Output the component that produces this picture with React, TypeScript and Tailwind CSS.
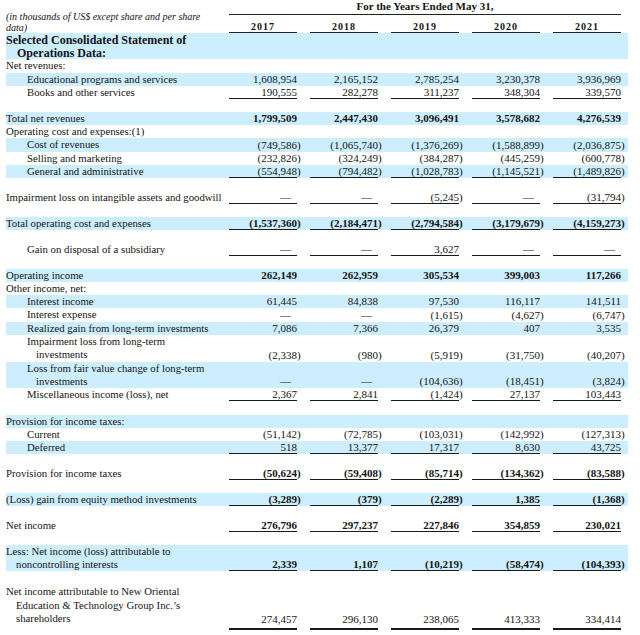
import React from "react";

type Row =
  | { blank: true; tall?: boolean }
  | {
      blank?: false;
      label: React.ReactNode;
      indent?: 0 | 1;
      shaded?: boolean;
      bold?: boolean;
      ul?: boolean;
      ul2?: boolean;
      tall?: boolean;
      values?: string[];
    };

const GRID =
  "grid grid-cols-[223px_68px_13px_68px_13px_68px_13px_68px_13px_68px_7px]";

const NUM = "flex items-end justify-end whitespace-nowrap";
const NUM_UL =
  "flex items-end justify-end whitespace-nowrap shadow-[inset_0_-1px_0_#1a1a1a]";
const NUM_UL2 =
  "flex items-end justify-end whitespace-nowrap pb-[4px] shadow-[inset_0_-2px_0_#1a1a1a]";

const rows: Row[] = [
  { label: "Net revenues:", tall: true },
  {
    label: "Educational programs and services",
    indent: 1,
    shaded: true,
    values: ["1,608,954", "2,165,152", "2,785,254", "3,230,378", "3,936,969"],
  },
  {
    label: "Books and other services",
    indent: 1,
    ul: true,
    values: ["190,555", "282,278", "311,237", "348,304", "339,570"],
  },
  { blank: true },
  {
    label: "Total net revenues",
    shaded: true,
    bold: true,
    values: ["1,799,509", "2,447,430", "3,096,491", "3,578,682", "4,276,539"],
  },
  { label: "Operating cost and expenses:(1)" },
  {
    label: "Cost of revenues",
    indent: 1,
    shaded: true,
    tall: true,
    values: ["(749,586)", "(1,065,740)", "(1,376,269)", "(1,588,899)", "(2,036,875)"],
  },
  {
    label: "Selling and marketing",
    indent: 1,
    values: ["(232,826)", "(324,249)", "(384,287)", "(445,259)", "(600,778)"],
  },
  {
    label: "General and administrative",
    indent: 1,
    shaded: true,
    ul: true,
    values: ["(554,948)", "(794,482)", "(1,028,783)", "(1,145,521)", "(1,489,826)"],
  },
  { blank: true },
  {
    label: "Impairment loss on intangible assets and goodwill",
    ul: true,
    values: ["—", "—", "(5,245)", "—", "(31,794)"],
  },
  { blank: true },
  {
    label: "Total operating cost and expenses",
    shaded: true,
    bold: true,
    ul: true,
    values: ["(1,537,360)", "(2,184,471)", "(2,794,584)", "(3,179,679)", "(4,159,273)"],
  },
  { blank: true },
  {
    label: "Gain on disposal of a subsidiary",
    indent: 1,
    ul: true,
    values: ["—", "—", "3,627", "—", "—"],
  },
  { blank: true },
  {
    label: "Operating income",
    shaded: true,
    bold: true,
    values: ["262,149", "262,959", "305,534", "399,003", "117,266"],
  },
  { label: "Other income, net:" },
  {
    label: "Interest income",
    indent: 1,
    shaded: true,
    values: ["61,445", "84,838", "97,530", "116,117", "141,511"],
  },
  {
    label: "Interest expense",
    indent: 1,
    tall: true,
    values: ["—", "—", "(1,615)", "(4,627)", "(6,747)"],
  },
  {
    label: "Realized gain from long-term investments",
    indent: 1,
    shaded: true,
    values: ["7,086", "7,366", "26,379", "407", "3,535"],
  },
  {
    label: (
      <>
        Impairment loss from long-term
        <br />
        investments
      </>
    ),
    indent: 1,
    tall: true,
    values: ["(2,338)", "(980)", "(5,919)", "(31,750)", "(40,207)"],
  },
  {
    label: (
      <>
        Loss from fair value change of long-term
        <br />
        investments
      </>
    ),
    indent: 1,
    shaded: true,
    values: ["—", "—", "(104,636)", "(18,451)", "(3,824)"],
  },
  {
    label: "Miscellaneous income (loss), net",
    indent: 1,
    ul: true,
    values: ["2,367", "2,841", "(1,424)", "27,137", "103,443"],
  },
  { blank: true, tall: true },
  { label: "Provision for income taxes:", shaded: true },
  {
    label: "Current",
    indent: 1,
    values: ["(51,142)", "(72,785)", "(103,031)", "(142,992)", "(127,313)"],
  },
  {
    label: "Deferred",
    indent: 1,
    shaded: true,
    ul: true,
    values: ["518", "13,377", "17,317", "8,630", "43,725"],
  },
  { blank: true },
  {
    label: "Provision for income taxes",
    bold: true,
    ul: true,
    values: ["(50,624)", "(59,408)", "(85,714)", "(134,362)", "(83,588)"],
  },
  { blank: true },
  {
    label: "(Loss) gain from equity method investments",
    shaded: true,
    bold: true,
    ul: true,
    values: ["(3,289)", "(379)", "(2,289)", "1,385", "(1,368)"],
  },
  { blank: true },
  {
    label: "Net income",
    bold: true,
    ul: true,
    values: ["276,796", "297,237", "227,846", "354,859", "230,021"],
  },
  { blank: true },
  {
    label: (
      <>
        Less: Net income (loss) attributable to
        <br />
        noncontrolling interests
      </>
    ),
    shaded: true,
    bold: true,
    ul: true,
    values: ["2,339", "1,107", "(10,219)", "(58,474)", "(104,393)"],
  },
  { blank: true, tall: true },
  {
    label: (
      <>
        Net income attributable to New Oriental
        <br />
        Education &amp; Technology Group Inc.’s
        <br />
        shareholders
      </>
    ),
    ul2: true,
    values: ["274,457", "296,130", "238,065", "413,333", "334,414"],
  },
];

function ValueCells({
  values,
  bold,
  ul,
  ul2,
}: {
  values: string[];
  bold?: boolean;
  ul?: boolean;
  ul2?: boolean;
}) {
  return (
    <>
      {values.map((v, i) => {
        const neg = v.startsWith("(");
        const dash = v === "—";
        const text = neg ? v.slice(0, -1) : v;
        return (
          <React.Fragment key={i}>
            <div className={ul2 ? NUM_UL2 : ul ? NUM_UL : NUM}>
              <span
                className={
                  (bold ? "font-bold " : "") + (dash ? "pr-[6px]" : "")
                }
              >
                {text}
              </span>
            </div>
            <div
              className={
                ul2
                  ? "flex items-end whitespace-nowrap pb-[4px]"
                  : "flex items-end whitespace-nowrap"
              }
            >
              <span className={bold ? "font-bold" : ""}>{neg ? ")" : ""}</span>
            </div>
          </React.Fragment>
        );
      })}
      <div />
    </>
  );
}

export default function App() {
  return (
    <div
      className="w-[640px] h-[635px] overflow-hidden bg-white text-[#141414] pl-[6px]"
      style={{ fontFamily: '"Liberation Serif", "Times New Roman", serif' }}
    >
      {/* Header */}
      <div className={`${GRID} leading-[13px]`}>
        <div className="row-span-2 h-[33px] pt-[12px]">
          <div className="italic text-[10px] leading-[10.5px] w-[205px]">
            (in thousands of US$ except share and per share data)
          </div>
        </div>
        <div className="col-span-9 h-[15px] border-b border-[#222] text-center font-bold text-[11px] leading-[13px]">
          For the Years Ended May 31,
        </div>
        <div className="col-span-1" />
        {["2017", "2018", "2019", "2020", "2021"].map((y) => (
          <React.Fragment key={y}>
            <div className="h-[18px] flex items-end justify-center border-b-[1.5px] border-[#222] font-bold text-[10px] leading-[10px] tracking-[1px]">
              {y}
            </div>
            <div />
          </React.Fragment>
        ))}
      </div>

      {/* Section title */}
      <div className="bg-[#cdeefe] w-[622px] font-bold text-[12px] leading-[13px] pt-[1px] h-[26px] pl-[11px] [text-indent:-11px]">
        Selected Consolidated Statement of
        <br />
        Operations Data:
      </div>

      {/* Body */}
      <div className="text-[11px] leading-[13px] w-[622px]">
        {rows.map((r, idx) => {
          if (r.blank)
            return (
              <div key={idx} className={r.tall ? "h-[14px]" : "h-[13px]"} />
            );
          return (
            <div
              key={idx}
              className={`${GRID} ${r.shaded ? "bg-[#cdeefe]" : ""}`}
            >
              <div
                className={`whitespace-nowrap text-[10.75px] ${
                  r.ul2 ? "leading-[13.5px] pb-[4px]" : r.tall ? "pb-[1px]" : ""
                } ${
                  r.indent === 1
                    ? "pl-[30px] [text-indent:-9px]"
                    : "pl-[10px] [text-indent:-10px]"
                }`}
              >
                {r.label}
              </div>
              {r.values ? (
                <ValueCells
                  values={r.values}
                  bold={r.bold}
                  ul={r.ul}
                  ul2={r.ul2}
                />
              ) : (
                <div className="col-span-10" />
              )}
            </div>
          );
        })}
      </div>
    </div>
  );
}
